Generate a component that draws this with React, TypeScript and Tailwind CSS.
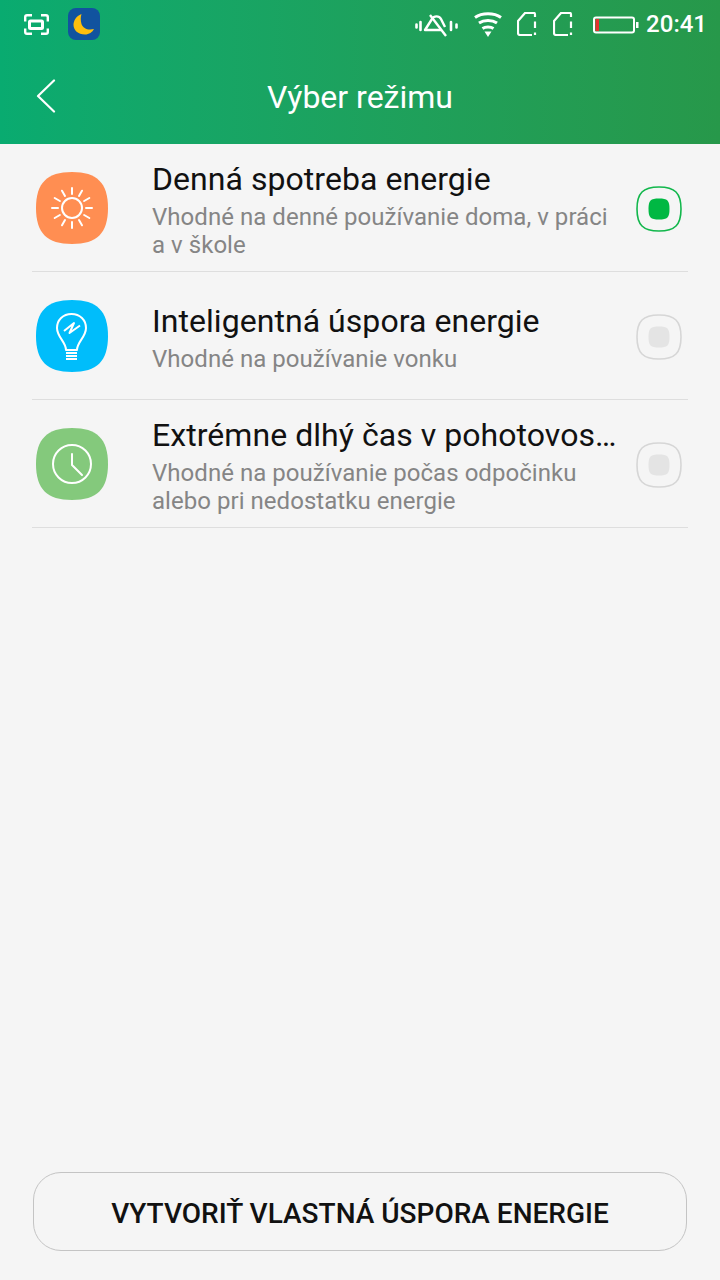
const squircle = "M36 0C61 0 72 11 72 36C72 61 61 72 36 72C11 72 0 61 0 36C0 11 11 0 36 0Z";

function SunIcon() {
  const rays = [0, 30, 60, 90, 120, 150, 180, 210, 240, 270, 300, 330];
  return (
    <svg width="72" height="72" viewBox="0 0 72 72">
      <path d={squircle} fill="#ff8e52" />
      <circle cx="36" cy="36" r="10" fill="none" stroke="#fff" strokeWidth="2" />
      {rays.map((r) => (
        <line
          key={r}
          x1="36"
          y1="16"
          x2="36"
          y2="22"
          stroke="#fff"
          strokeWidth="2"
          strokeLinecap="round"
          transform={`rotate(${r} 36 36)`}
        />
      ))}
    </svg>
  );
}

function BulbIcon() {
  return (
    <svg width="72" height="72" viewBox="0 0 72 72">
      <path d={squircle} fill="#00bdfb" />
      <path
        d="M30 50C30 42 21 37 21 28C21 20 27 14 35.500 14C44 14 50 20 50 28C50 37 41 42 41 50Z"
        fill="none"
        stroke="#fff"
        strokeWidth="2"
        strokeLinejoin="round"
      />
      <path d="M28 31L38 23L33.500 33L44 25.500" fill="none" stroke="#fff" strokeWidth="2" strokeLinejoin="round" />
      <path d="M30 53H41M30 56H41M30 59H41" stroke="#fff" strokeWidth="1.8" />
    </svg>
  );
}

function ClockIcon() {
  return (
    <svg width="72" height="72" viewBox="0 0 72 72">
      <path d={squircle} fill="#84c97c" />
      <circle cx="36" cy="36" r="19" fill="none" stroke="#fff" strokeWidth="2" />
      <path d="M36 26V37L46 47" fill="none" stroke="#fff" strokeWidth="2" strokeLinecap="round" strokeLinejoin="round" />
    </svg>
  );
}

function Radio({ on }: { on: boolean }) {
  const outer = "M23 1C39 1 45 7 45 23C45 39 39 45 23 45C7 45 1 39 1 23C1 7 7 1 23 1Z";
  const inner = "M23 12.500C31.500 12.500 33.500 14.500 33.500 23C33.500 31.500 31.500 33.500 23 33.500C14.500 33.500 12.500 31.500 12.500 23C12.500 14.500 14.500 12.500 23 12.500Z";
  return (
    <svg width="46" height="46" viewBox="0 0 46 46" className="shrink-0">
      <path d={outer} fill="none" stroke={on ? "#12b74c" : "#d6d6d6"} strokeWidth="1.6" />
      <path d={inner} fill={on ? "#00b843" : "#e4e4e4"} />
    </svg>
  );
}

function SimIcon({ className }: { className: string }) {
  return (
    <svg width="20" height="24" viewBox="0 0 20 24" className={className} fill="none" stroke="#fff" strokeWidth="2.2">
      <path d="M15 23H3C2 23 1 22 1 21V9L8 1H17C18 1 18 1.500 18 2.500V5" />
      <path d="M18 9.500V16" />
      <path d="M18 20.500V23" />
    </svg>
  );
}

function StatusIcons() {
  return (
    <div className="flex items-center">
      {/* silent bell */}
      <svg width="44" height="30" viewBox="0 0 44 30" className="mr-[15px]" fill="none" stroke="#fff">
        <path d="M26 21H10L17 10C19 6.500 24 6.500 26 10L30 18" strokeWidth="2.4" strokeLinejoin="round" />
        <path d="M15 6L31 27" strokeWidth="2.4" />
        <path d="M1.500 15.500V18.500M5.500 13V21M36 13V21M41.500 15.500V18.500" strokeWidth="2.6" strokeLinecap="round" />
      </svg>
      {/* wifi */}
      <svg width="28" height="28" viewBox="0 0 28 28" className="mr-[15px]" fill="none" stroke="#fff" strokeWidth="3">
        <path d="M1 7.500C8 2.500 20 2.500 27 7.500" />
        <path d="M5 13C10 9.500 18 9.500 23 13" />
        <path d="M8.500 18.500C11.500 16.500 16.500 16.500 19.500 18.500" />
        <path d="M10.500 21.500H17.500L14 27Z" fill="#fff" stroke="none" />
      </svg>
      <SimIcon className="mr-4" />
      <SimIcon className="mr-5" />
      {/* battery */}
      <svg width="46" height="20" viewBox="0 0 46 20" className="mr-[7px]" fill="none">
        <rect x="1" y="3.500" width="40" height="15" rx="2" stroke="#fff" strokeWidth="2" />
        <rect x="2.500" y="5" width="3.500" height="12" fill="#e5322d" />
        <rect x="43" y="8" width="2.500" height="6" fill="#fff" />
      </svg>
      <span className="text-2xl font-medium leading-none text-white">20:41</span>
    </div>
  );
}

const rows = [
  { title: "Denná spotreba energie", lines: ["Vhodné na denné používanie doma, v práci", "a v škole"], icon: <SunIcon />, on: true },
  { title: "Inteligentná úspora energie", lines: ["Vhodné na používanie vonku"], icon: <BulbIcon />, on: false },
  { title: "Extrémne dlhý čas v pohotovos…", lines: ["Vhodné na používanie počas odpočinku", "alebo pri nedostatku energie"], icon: <ClockIcon />, on: false },
];

export default function App() {
  return (
    <div className="flex h-[1280px] w-[720px] flex-col overflow-hidden bg-[#f5f5f5] font-['Roboto',sans-serif]">
      <div className="h-36 shrink-0 bg-gradient-to-r from-[#09ab70] to-[#27984a]">
        <div className="flex h-12 items-center justify-between pl-6 pr-[13px]">
          <div className="flex items-center gap-[18px]">
            <svg width="26" height="22" viewBox="0 0 26 22" fill="none" stroke="#fff" strokeWidth="2.4">
              <path d="M1.200 8.500V4C1.200 3 2 2.200 3 2.200H8M17 2.200H22C23 2.200 23.800 3 23.800 4V8.500M1.200 15.500V19C1.200 20 2 20.800 3 20.800H8M17 20.800H22C23 20.800 23.800 20 23.800 19V15.500" />
              <rect x="5.500" y="8" width="13" height="7.500" rx="1" strokeWidth="3" />
            </svg>
            <svg width="32" height="32" viewBox="0 0 32 32">
              <rect width="32" height="32" rx="8" fill="#11539f" />
              <path d="M13.500 6C8 8 5.500 13 5.500 17C5.500 22 10 26.500 17 26.500C21 26.500 24.500 24 26 21C20 22.500 15 20.500 13.500 16C12.500 12.500 12.500 9 13.500 6Z" fill="#fdbf0d" />
            </svg>
          </div>
          <StatusIcons />
        </div>
        <div className="relative flex h-24 items-center justify-center pt-[2px]">
          <svg width="20" height="34" viewBox="0 0 20 34" className="absolute left-9 top-[31px]" fill="none" stroke="#fff" strokeWidth="2.2" strokeLinecap="round" strokeLinejoin="round">
            <path d="M18 1.500L2 17L18 32.500" />
          </svg>
          <h1 className="text-[32px] font-normal text-white">Výber režimu</h1>
        </div>
      </div>

      <div className="flex flex-1 flex-col">
        {rows.map((row) => (
          <div key={row.title} className="mx-8 flex h-32 items-center border-b border-[#dedede]">
            <div className="ml-1 mr-11 shrink-0">{row.icon}</div>
            <div className="min-w-0 flex-1 pt-[2px]">
              <div className="whitespace-nowrap text-[32px] leading-10 tracking-[0.05px] text-[#111]">{row.title}</div>
              <div className="mt-1">
                {row.lines.map((line) => (
                  <div key={line} className="text-2xl leading-7 tracking-[0.04px] text-[#858585]">
                    {line}
                  </div>
                ))}
              </div>
            </div>
            <div className="ml-[17px] mr-[6px] mt-[2px]">
              <Radio on={row.on} />
            </div>
          </div>
        ))}
      </div>

      <div className="mx-[33px] mb-[29px] flex h-[79px] items-center justify-center rounded-[28px] border border-[#c4c4c4] pt-[4px] text-[28px] font-medium text-[#111]">
        VYTVORIŤ VLASTNÁ ÚSPORA ENERGIE
      </div>
    </div>
  );
}
